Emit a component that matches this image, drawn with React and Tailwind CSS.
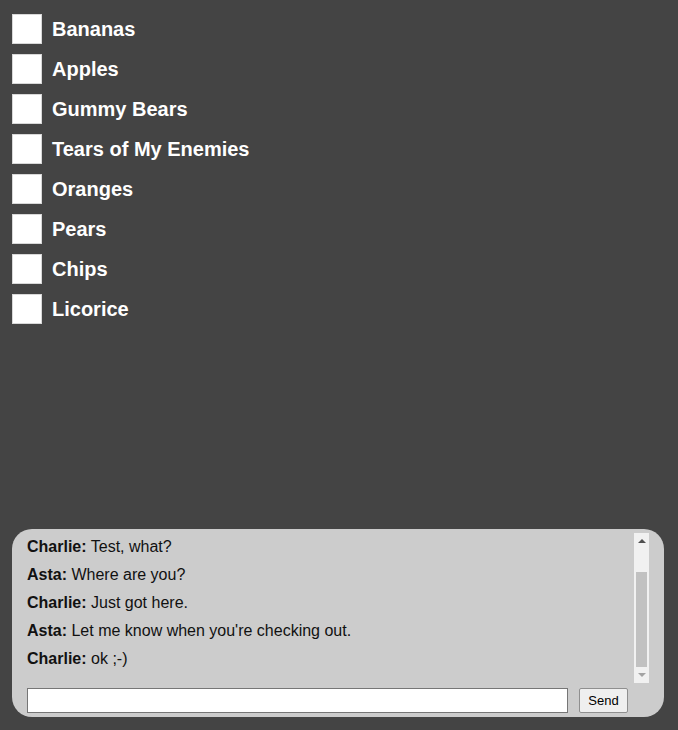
const items = [
  "Bananas",
  "Apples",
  "Gummy Bears",
  "Tears of My Enemies",
  "Oranges",
  "Pears",
  "Chips",
  "Licorice",
];

const messages = [
  { who: "Charlie", text: "Test, what?" },
  { who: "Asta", text: "Where are you?" },
  { who: "Charlie", text: "Just got here." },
  { who: "Asta", text: "Let me know when you're checking out." },
  { who: "Charlie", text: "ok ;-)" },
];

export default function App() {
  return (
    <div className="w-[678px] h-[730px] bg-[#444444] flex flex-col font-['Liberation_Sans',Arial,sans-serif]">
      <ul className="flex flex-col gap-[10px] pt-[14px] pl-[12px] flex-1">
        {items.map((item) => (
          <li key={item} className="flex items-center h-[30px]">
            <span className="w-[30px] h-[30px] bg-white border border-[#d8d8d8] shrink-0" />
            <span className="ml-[10px] text-[20px] font-bold text-white">{item}</span>
          </li>
        ))}
      </ul>

      <div className="ml-[12px] mr-[14px] mb-[13px] h-[188px] bg-[#cccccc] rounded-[20px] pt-[4px] pl-[15px] pr-[15px] flex flex-col">
        <div className="flex h-[150px]">
          <div className="flex-1 overflow-hidden">
            {messages.map((m, idx) => (
              <p key={idx} className="h-[28px] leading-[28px] text-[16px] text-[#111]">
                <b>{m.who}:</b> {m.text}
              </p>
            ))}
          </div>
          <div className="w-[15px] bg-[#f1f1f1] flex flex-col items-center">
            <div className="h-[15px] flex items-center justify-center">
              <div className="w-0 h-0 border-l-[4px] border-r-[4px] border-b-[4px] border-l-transparent border-r-transparent border-b-[#505050]" />
            </div>
            <div className="h-[24px]" />
            <div className="w-[11px] h-[95px] bg-[#c1c1c1]" />
            <div className="flex-1 flex items-center justify-center">
              <div className="w-0 h-0 border-l-[4px] border-r-[4px] border-t-[4px] border-l-transparent border-r-transparent border-t-[#a3a3a3]" />
            </div>
          </div>
        </div>
        <div className="flex items-center mt-[5px] pr-[21px]">
          <input
            type="text"
            className="flex-1 h-[25px] bg-white border border-[#767676] outline-none"
          />
          <button className="ml-[11px] w-[49px] h-[25px] bg-[#efefef] border border-[#8f8f8f] rounded-[2px] text-[13px] text-black">
            Send
          </button>
        </div>
      </div>
    </div>
  );
}
